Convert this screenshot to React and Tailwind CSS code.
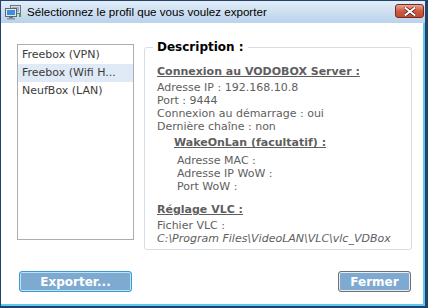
import React from "react";

const profiles = ["Freebox (VPN)", "Freebox (Wifi H...", "NeufBox (LAN)"];

const NetIcon = () => (
    <svg width="17" height="15" viewBox="0 0 17 15">
        {/* back monitor */}
        <rect x="5.5" y="0.5" width="10" height="8" fill="#d8dde4" stroke="#6b7785" />
        <rect x="7" y="2" width="7" height="5" fill="#9fb3c8" />
        <rect x="14" y="9" width="2" height="3" fill="#3fae3f" />
        {/* front monitor */}
        <rect x="0.5" y="3.5" width="11" height="8" fill="#e4e8ec" stroke="#5b6775" />
        <rect x="2" y="5" width="8" height="5" fill="#3f8fdc" />
        <rect x="4" y="12" width="4" height="1" fill="#6b7785" />
        <rect x="2" y="13" width="8" height="1.5" fill="#8a96a4" />
    </svg>
);

const CloseIcon = () => (
    <svg width="12" height="9" viewBox="0 0 12 9">
        <path d="M1.5 1 L10.5 8 M10.5 1 L1.5 8" stroke="#5a1c12" strokeWidth="3.4" strokeLinecap="square" />
        <path d="M1.5 1 L10.5 8 M10.5 1 L1.5 8" stroke="#ffffff" strokeWidth="2" strokeLinecap="square" />
    </svg>
);

const App = () => {
    return (
        <div className="w-[428px] h-[308px] bg-[#22426a] pl-px pt-px pr-[3px] pb-[2px] flex flex-col font-['DejaVu_Sans',sans-serif]">
            {/* title bar */}
            <div className="h-[22px] flex items-center bg-gradient-to-b from-[#e2edf8] to-[#bad2ea] pl-[4px] pr-[1px]">
                <NetIcon />
                <span className="ml-[5px] text-[11.6px] text-black font-['Liberation_Sans',sans-serif] leading-none">
                    Sélectionnez le profil que vous voulez exporter
                </span>
                <div className="ml-auto mb-[2px] w-[29px] h-[14px] rounded-[3px] border border-[#7a2a1c] bg-gradient-to-b from-[#e5a596] via-[#cf5a42] to-[#c24a34] flex items-center justify-center">
                    <CloseIcon />
                </div>
            </div>

            {/* body */}
            <div className="flex-1 bg-white border-r-2 border-b-2 border-[#5cc9ef] flex flex-col">
                <div className="flex items-start pl-[16px] pt-[17px] gap-[10px]">
                    {/* profile list */}
                    <div className="mt-[4px] w-[117px] h-[196px] border border-[#abadb3] pt-px text-[11px] text-[#3c3c3c]">
                        {profiles.map((p, i) => (
                            <div
                                key={p}
                                className={`h-[18px] leading-[18px] pl-[4px] whitespace-nowrap ${i === 1 ? "bg-[#dfeaf6]" : ""}`}
                            >
                                {p}
                            </div>
                        ))}
                    </div>

                    {/* description group */}
                    <fieldset className="w-[268px] h-[210px] border border-[#d5dee6] rounded-[3px] pl-[12px] pr-[2px] overflow-hidden">
                        <legend className="-ml-[4px] px-[4px] text-[12px] leading-[15px] font-bold text-black">
                            Description :
                        </legend>
                        <div className="text-[11px] leading-[13px] text-[#5e5e5e] whitespace-nowrap">
                            <div className="mt-[10px] mb-[3px] font-bold underline">Connexion au VODOBOX Server :</div>
                            <div>Adresse IP : 192.168.10.8</div>
                            <div>Port : 9444</div>
                            <div>Connexion au démarrage : oui</div>
                            <div>Dernière chaîne : non</div>
                            <div className="mt-[3px] ml-[17px] font-bold underline">WakeOnLan (facultatif) :</div>
                            <div className="mt-[5px] ml-[20px]">
                                <div>Adresse MAC :</div>
                                <div>Adresse IP WoW :</div>
                                <div>Port WoW :</div>
                            </div>
                            <div className="mt-[10px] mb-[3px] font-bold underline">Réglage VLC :</div>
                            <div>Fichier VLC :</div>
                            <div className="italic">C:\Program Files\VideoLAN\VLC\vlc_VDBox</div>
                        </div>
                    </fieldset>
                </div>

                {/* buttons */}
                <div className="mt-auto mb-[12px] flex justify-between pl-[18px] pr-[12px]">
                    <button className="w-[113px] h-[21px] rounded-[3px] border border-[#3a9ad6] bg-[#7eaad2] shadow-[inset_0_0_0_1px_#b8e6fa] text-white text-[12px] font-bold leading-none">
                        Exporter...
                    </button>
                    <button className="w-[73px] h-[21px] rounded-[3px] border border-[#707070] bg-[#7eaad2] shadow-[inset_0_0_0_1px_#e8eef4] text-white text-[12px] font-bold leading-none">
                        Fermer
                    </button>
                </div>
            </div>
        </div>
    );
};

export default App;
